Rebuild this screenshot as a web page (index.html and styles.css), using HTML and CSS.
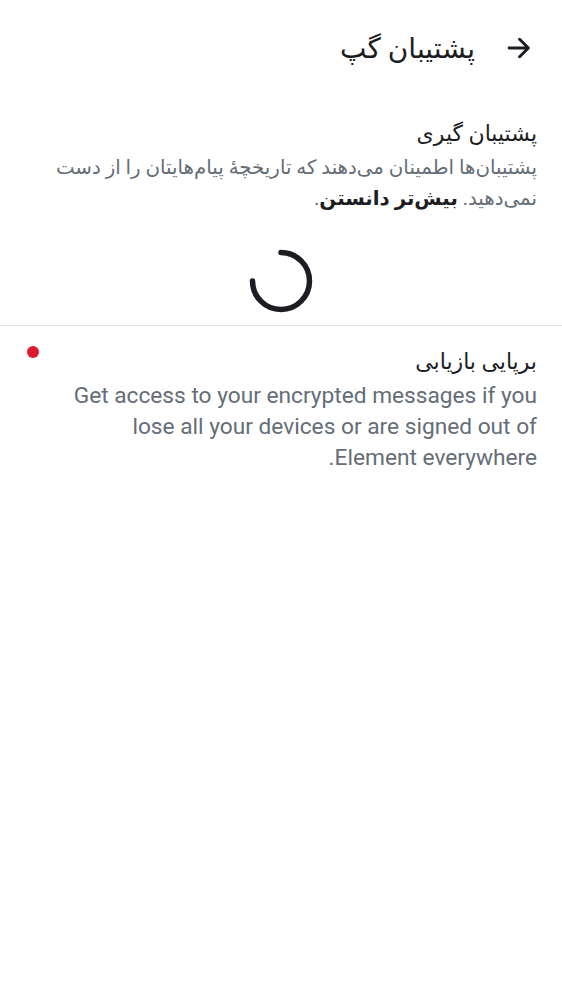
FILE: index.html
```html
<!DOCTYPE html>
<html lang="fa" dir="rtl">
<head>
<meta charset="utf-8">
<link rel="stylesheet" href="styles.css">
</head>
<body>
<header class="topbar">
  <svg class="back" width="28" height="28" viewBox="0 0 24 24"><path d="M3.5 12h16M12.5 4.5l7.5 7.5-7.5 7.5" fill="none" stroke="#1b1d22" stroke-width="2.5" stroke-linecap="round" stroke-linejoin="round"/></svg>
  <h1 class="title">پشتیبان گپ</h1>
</header>
<section class="section">
  <h2 class="heading">پشتیبان گیری</h2>
  <p class="desc">پشتیبان‌ها اطمینان می‌دهند که تاریخچهٔ پیام‌هایتان را از دست نمی‌دهید. <b class="link">بیش‌تر دانستن</b>.</p>
  <div class="spinner-wrap">
    <svg width="66" height="66" viewBox="0 0 66 66"><path d="M33 4.5 A28.5 28.5 0 1 1 4.5 33" fill="none" stroke="#1b1d22" stroke-width="5.5" stroke-linecap="round"/></svg>
  </div>
</section>
<section class="section recovery">
  <div class="row">
    <div class="texts">
      <h2 class="heading">برپایی بازیابی</h2>
      <p class="desc en">Get access to your encrypted messages if you lose all your devices or are signed out of Element everywhere.</p>
    </div>
    <span class="dot"></span>
  </div>
</section>
</body>
</html>
```
FILE: styles.css
```css
html, body { margin: 0; padding: 0; background: #fff; }
body { font-family: Roboto, "DejaVu Sans", sans-serif; color: #1b1d22; width: 562px; }
.topbar { display: flex; align-items: center; gap: 30px; height: 96px; padding: 0 29px 0 0; box-sizing: border-box; }
.back { flex: none; }
.title { margin: 0; font-size: 28px; font-weight: 400; }
.section { padding: 21px 25px 0 25px; }
.heading { margin: 0 0 1px; font-size: 22px; font-weight: 400; line-height: 34px; color: #1b1d22; }
.desc { margin: 0; font-size: 19.8px; line-height: 31px; color: #656d77; }
.link { color: #1b1d22; font-weight: 700; }
.spinner-wrap { display: flex; justify-content: center; padding: 34px 0 11px; }
.recovery { border-top: 1px solid #e1e6ec; margin-top: 0; padding-top: 19px; }
.row { display: flex; justify-content: space-between; }
.texts { padding-left: 20px; }
.en { font-size: 22.7px; margin-top: 1px; }
.dot { flex: none; width: 12px; height: 12px; border-radius: 50%; background: #db1a2d; margin-top: 1px; margin-left: 2px; }
```
